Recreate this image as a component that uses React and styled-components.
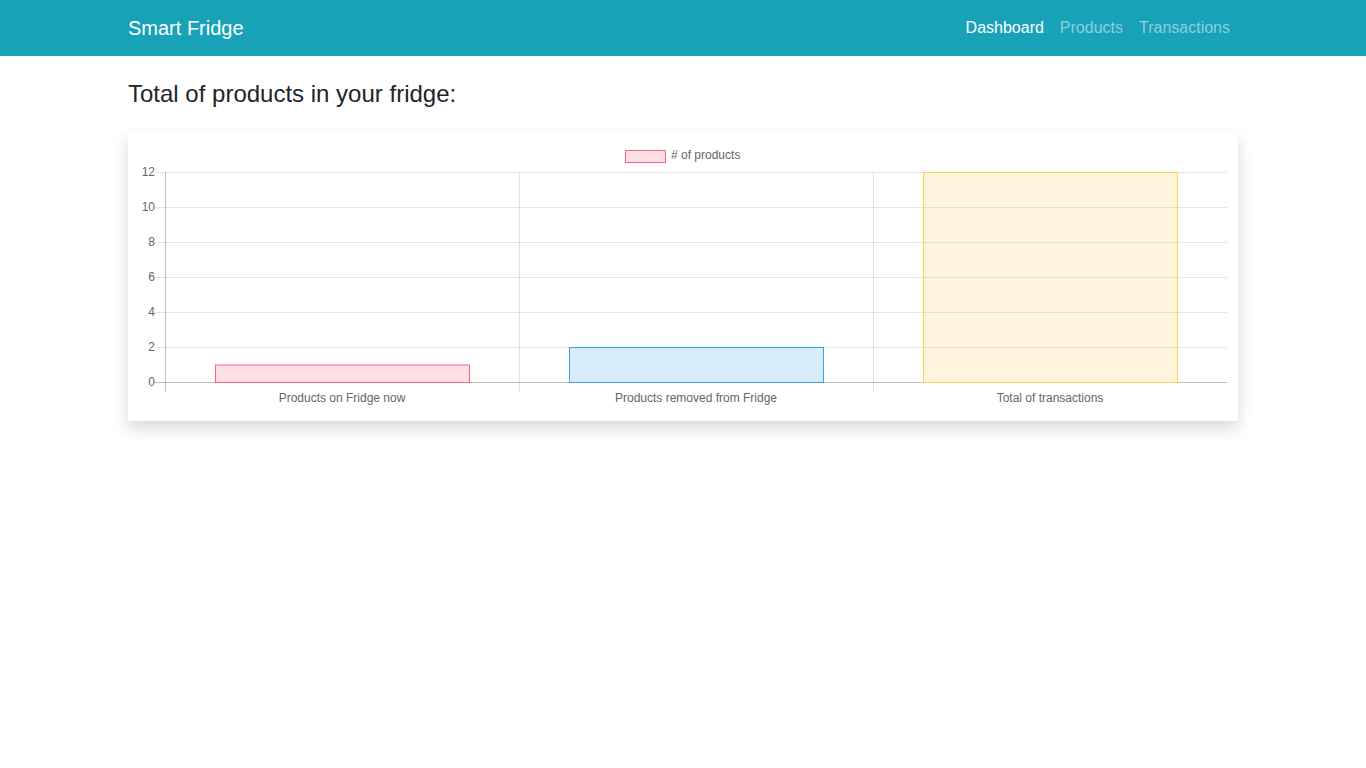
import React from 'react'
import styled, { createGlobalStyle } from 'styled-components'

const GlobalStyle = createGlobalStyle`
  body {
    margin: 0;
    font-family: "Liberation Sans", Arial, sans-serif;
    color: #212529;
    background: #fff;
  }
`

const Navbar = styled.nav`
  background: #17a2b8;
  height: 56px;
`
const Container = styled.div`
  width: 1110px;
  margin: 0 auto;
`
const NavInner = styled(Container)`
  height: 100%;
  display: flex;
  align-items: center;
  justify-content: space-between;
`
const Main = styled(Container)`
  padding-bottom: 48px;
`
const Brand = styled.a`
  font-size: 20px;
  color: #fff;
  text-decoration: none;
  line-height: 30px;
`
const NavLinks = styled.div`
  display: flex;
`
const NavLink = styled.a`
  font-size: 16px;
  line-height: 24px;
  padding: 8px;
  text-decoration: none;
  color: ${props => (props.active ? '#fff' : 'rgba(255, 255, 255, 0.5)')};
`
const Heading = styled.h4`
  margin: 24px 0 0;
  font-size: 24px;
  font-weight: 500;
  line-height: 1.2;
`
const Card = styled.div`
  margin-top: 22px;
  padding: 10px;
  box-shadow: 0 0.5rem 1rem rgba(0, 0, 0, 0.15);
  border-radius: 2px;

  svg {
    display: block;
  }
`

const data = [
  { label: 'Products on Fridge now', value: 1, fill: 'rgba(255,99,132,0.2)', stroke: 'rgb(255,99,132)' },
  { label: 'Products removed from Fridge', value: 2, fill: 'rgba(54,162,235,0.2)', stroke: 'rgb(54,162,235)' },
  { label: 'Total of transactions', value: 12, fill: 'rgba(255,206,86,0.2)', stroke: 'rgb(255,206,86)' }
]

const BarChart = () => {
  const left = 27
  const right = 1089
  const top = 31
  const bottom = 241
  const max = 12
  const unit = (bottom - top) / max
  const cat = (right - left) / data.length
  const barW = 254
  const ticks = [0, 2, 4, 6, 8, 10, 12]
  const font = { fontFamily: '"Liberation Sans", Arial, sans-serif', fontSize: 12, fill: '#666' }
  return (
    <svg width='1090' height='270' viewBox='0 0 1090 270'>
      {/* legend */}
      <rect x='487.5' y='9.5' width='40' height='12' fill={data[0].fill} stroke={data[0].stroke} />
      <text x='533' y='18' {...font}># of products</text>
      {/* horizontal grid */}
      {ticks.map(t => {
        const y = Math.round(bottom - t * unit) + 0.5
        return (
          <g key={t}>
            <line x1={left - 10} x2={right} y1={y} y2={y} stroke={t === 0 ? 'rgba(0,0,0,0.25)' : 'rgba(0,0,0,0.1)'} />
            <text x={left - 10} y={y + 3.5} textAnchor='end' {...font}>{t}</text>
          </g>
        )
      })}
      {/* vertical grid */}
      {[0, 1, 2].map(i => {
        const x = Math.round(left + i * cat) + 0.5
        return <line key={i} x1={x} x2={x} y1={top} y2={bottom + 10} stroke={i === 0 ? 'rgba(0,0,0,0.25)' : 'rgba(0,0,0,0.1)'} />
      })}
      {data.map((d, i) => {
        const cx = left + cat * i + cat / 2
        const x = Math.round(cx - barW / 2) + 0.5
        const h = d.value * unit
        return (
          <g key={d.label}>
            <rect x={x} y={bottom - h + 0.5} width={barW} height={h} fill={d.fill} stroke={d.stroke} />
            <text x={cx} y={261} textAnchor='middle' {...font}>{d.label}</text>
          </g>
        )
      })}
    </svg>
  )
}

export default function App () {
  return (
    <>
      <GlobalStyle />
      <Navbar>
        <NavInner>
          <Brand href='#'>Smart Fridge</Brand>
          <NavLinks>
            <NavLink href='#' active>Dashboard</NavLink>
            <NavLink href='#'>Products</NavLink>
            <NavLink href='#'>Transactions</NavLink>
          </NavLinks>
        </NavInner>
      </Navbar>
      <Main>
        <Heading>Total of products in your fridge:</Heading>
        <Card>
          <BarChart />
        </Card>
      </Main>
    </>
  )
}
